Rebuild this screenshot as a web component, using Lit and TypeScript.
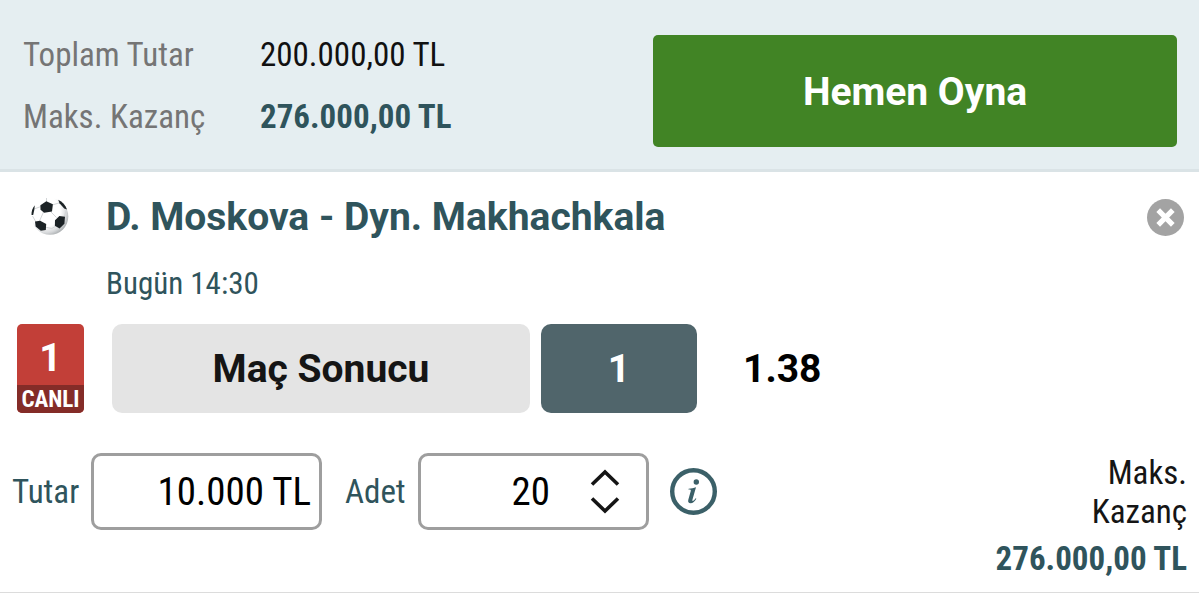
import { LitElement, html, css } from "lit";
import { customElement, property, state } from "lit/decorators.js";

@customElement("soccer-ball")
export class SoccerBall extends LitElement {
  static styles = css`
    :host { display: block; width: 40px; height: 40px; }
    svg { display: block; width: 100%; height: 100%; }
  `;
  render() {
    return html`<svg viewBox="0 0 40 40" aria-hidden="true">
      <defs>
        <radialGradient id="shade" cx="36%" cy="36%" r="70%">
          <stop offset="60%" stop-color="#fff" />
          <stop offset="84%" stop-color="#d6d8da" />
          <stop offset="100%" stop-color="#a9adaf" />
        </radialGradient>
      </defs>
      <circle cx="20" cy="19.500" r="18.300" fill="url(#shade)" />
      <path d="M16.500 1v4.500M11 9.500L4 12M22.300 8l8-2.500M13.500 15L9.500 24M20.500 14.500l6 6M14.800 30l7 1.500 5-3M34 20l2.500-7M6 25l-3.500-6" fill="none" stroke="#d3d6d8" stroke-width="1" />
      <g fill="#1b2225">
        <path d="M10.400 8.200l5.900-3.900 6.600 2.900-.9 7.300-7.800 1.300-3.700-3z" />
        <path d="M25 23.200l4.400-4.200 5.600.8-.6 7-4.800 4.600-4.700-2.700z" />
        <path d="M5 24.600l5.200-.9 6 3.400-.4 5.800-5 .9-5.200-4.300z" />
        <path d="M1.500 18c-.2-3.600 1-7 3.300-9.700l-.5 4.400-1.100 5.300z" />
        <path d="M28.200 2.700c4.200 1.900 7.400 5.500 8.800 9.700l-2.800-.9-4.700-5.200z" />
      </g>
    </svg>`;
  }
}

@customElement("bet-summary")
export class BetSummary extends LitElement {
  @property() total = "";
  @property() win = "";
  static styles = css`
    :host { display: block; }
    .bar {
      display: grid;
      grid-template-columns: 630fr 524fr;
      align-items: start;
      padding: 35px 22px 22px 23px;
      background: #e5eef1;
      border-bottom: 3px solid #dae3e6;
    }
    .totals {
      display: grid;
      grid-template-columns: 237px 1fr;
      row-gap: 22px;
      margin: 0;
      font-size: 33px;
      line-height: 40px;
    }
    dt { color: #757575; }
    dd { margin: 0; color: #111; }
    .win { color: #2f545c; font-weight: 700; }
    .play {
      height: 112px;
      padding: 2px 0 0;
      border: 0;
      border-radius: 5px;
      background: #418425;
      color: #fff;
      font: 700 39px/48px "Roboto", sans-serif;
    }
  `;
  render() {
    return html`<header class="bar">
      <dl class="totals">
        <dt>Toplam Tutar</dt><dd>${this.total}</dd>
        <dt>Maks. Kazanç</dt><dd class="win">${this.win}</dd>
      </dl>
      <button class="play" type="button">Hemen Oyna</button>
    </header>`;
  }
}

@customElement("bet-card")
export class BetCard extends LitElement {
  @property() win = "";
  @state() private count = 20;
  static styles = css`
    :host { display: block; }
    .card { border-bottom: 1px solid #dcdcdc; background: #fff; }
    button { padding: 0; border: 0; font-family: inherit; }
    svg { display: block; }
    .head {
      display: grid;
      grid-template-columns: 76px 1fr 37px;
      align-items: center;
      padding: 20px 15px 0 30px;
    }
    h1 { margin: 0; color: #2f545c; font: 700 39px/50px "Roboto", sans-serif; }
    .close { width: 37px; height: 37px; background: none; }
    .time { margin: 22px 0 0 106px; color: #2f545c; font-size: 31px; line-height: 40px; }
    .pick { display: flex; align-items: center; padding: 20px 17px 0; font: 700 39px/48px "Roboto", sans-serif; }
    .live {
      display: flex;
      flex-direction: column;
      width: 67px;
      height: 89px;
      margin-right: 28px;
      border-radius: 5px;
      overflow: hidden;
      background: #c23f38;
      color: #fff;
      text-align: center;
    }
    .code { height: 61px; line-height: 68px; }
    .tag { height: 28px; background: #842c28; font: 700 23px/30px "Roboto Condensed", "Roboto", sans-serif; }
    .market, .choice { height: 89px; border-radius: 10px; font-size: 39px; font-weight: 700; }
    .market { flex: 0 1 418px; margin-right: 11px; background: #e4e4e4; color: #151515; }
    .choice { flex: 0 1 156px; margin-right: 46px; background: #50656b; color: #fff; }
    .odds { color: #000; }
    .stake { display: flex; align-items: flex-start; padding: 40px 12px 14px; }
    .fields { display: flex; flex: 1; align-items: center; }
    label { flex: none; color: #2f545c; font-size: 33px; line-height: 40px; }
    .amount-label { width: 79px; }
    .count-label { width: 73px; margin-left: 23px; }
    .box {
      box-sizing: border-box;
      display: flex;
      align-items: center;
      width: 231px;
      height: 77px;
      border: 3px solid #9e9e9e;
      border-radius: 10px;
      background: #fff;
    }
    input {
      box-sizing: border-box;
      flex: 1;
      min-width: 0;
      height: 48px;
      padding: 0 8px 0 0;
      border: 0;
      background: none;
      color: #000;
      font-family: inherit;
      font-size: 39px;
      text-align: right;
    }
    .count { padding-right: 40px; }
    .steps { display: grid; row-gap: 11px; margin-right: 26px; }
    .step { width: 30px; height: 17px; background: none; }
    .info { width: 47px; height: 47px; margin-left: 21px; background: none; }
    .result { color: #151515; font-size: 33px; line-height: 39px; text-align: right; }
    .label { display: block; width: min-content; margin-left: auto; }
    .value { display: block; margin-top: 8px; color: #2f545c; font-weight: 700; }
  `;
  private step(by: number) {
    this.count = Math.max(1, this.count + by);
  }
  render() {
    return html`<article class="card">
      <div class="head">
        <soccer-ball></soccer-ball>
        <h1>D. Moskova - Dyn. Makhachkala</h1>
        <button class="close" type="button" aria-label="Sil">
          <svg viewBox="0 0 37 37"><circle cx="18.500" cy="18.500" r="18.500" fill="#a3a3a3" /><path d="M11.200 11.200l14.600 14.600M25.800 11.200L11.200 25.800" stroke="#fff" stroke-width="5.200" /></svg>
        </button>
      </div>
      <div class="time">Bugün 14:30</div>
      <div class="pick">
        <div class="live"><span class="code">1</span><span class="tag">CANLI</span></div>
        <button class="market" type="button">Maç Sonucu</button>
        <button class="choice" type="button">1</button>
        <span class="odds">1.38</span>
      </div>
      <div class="stake">
        <div class="fields">
          <label class="amount-label" for="amount">Tutar</label>
          <div class="box"><input id="amount" type="text" value="10.000 TL" /></div>
          <label class="count-label" for="count">Adet</label>
          <div class="box">
            <input id="count" class="count" type="text" inputmode="numeric" .value=${String(this.count)} />
            <div class="steps">
              <button class="step" type="button" aria-label="Artır" @click=${() => this.step(1)}>
                <svg viewBox="0 0 30 17"><path d="M2 15.500L15 3l13 12.500" fill="none" stroke="#151515" stroke-width="3.600" /></svg>
              </button>
              <button class="step" type="button" aria-label="Azalt" @click=${() => this.step(-1)}>
                <svg viewBox="0 0 30 17"><path d="M2 1.500L15 14 28 1.500" fill="none" stroke="#151515" stroke-width="3.600" /></svg>
              </button>
            </div>
          </div>
          <button class="info" type="button" aria-label="Bilgi">
            <svg viewBox="0 0 47 47"><circle cx="23.500" cy="23.500" r="21.300" fill="none" stroke="#3b6068" stroke-width="4.400" /><circle cx="26.300" cy="14" r="2.700" fill="#3b6068" /><path d="M18.600 20.700c2.800-.2 5-.7 7.400-1.400l-3.500 12.300c-.4 1.400.1 1.700.8 1.200.8-.5 1.600-1.600 2.300-2.600l.8.500c-1.600 2.700-3.500 4.600-5.800 4.600-2 0-2.900-1.300-2.300-3.500l2.400-8.500c.4-1.400 0-1.700-2.300-1.700z" fill="#3b6068" /></svg>
          </button>
        </div>
        <div class="result">
          <span class="label">Maks. Kazanç</span>
          <strong class="value">${this.win}</strong>
        </div>
      </div>
    </article>`;
  }
}

@customElement("app-root")
export class AppRoot extends LitElement {
  static styles = css`
    :host {
      display: block;
      min-height: 100vh;
      background: #fff;
      font-family: "Roboto Condensed", "Roboto", sans-serif;
    }
  `;
  render() {
    return html`
      <bet-summary total="200.000,00 TL" win="276.000,00 TL"></bet-summary>
      <bet-card win="276.000,00 TL"></bet-card>
    `;
  }
}
